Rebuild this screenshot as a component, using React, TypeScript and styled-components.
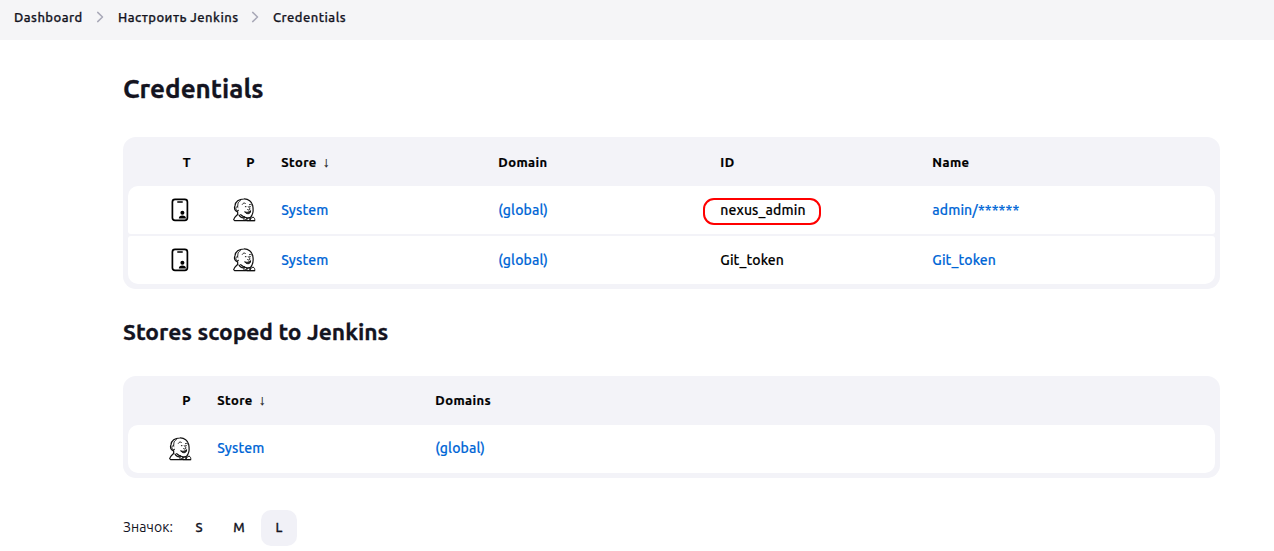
import React from "react";
import styled, { createGlobalStyle } from "styled-components";

const GlobalStyle = createGlobalStyle`
  body {
    margin: 0;
    background: #fff;
    color: #14141f;
    font-family: Ubuntu, "Noto Sans", "Open Sans", sans-serif;
  }
  svg { display: block; flex: none; }
`;

const Page = styled.div`
  height: 551px;
  overflow: hidden;
`;

const Breadcrumbs = styled.nav`
  display: flex;
  align-items: center;
  box-sizing: border-box;
  height: 40px;
  padding: 0 14px 6px;
  background: #f5f5f7;
`;

const Crumb = styled.a<{ $w: number }>`
  width: ${(p) => p.$w}px;
  font-size: 13px;
  font-weight: 500;
  line-height: 20px;
  letter-spacing: 0.46px;
  -webkit-text-stroke: 0.25px currentColor;
  white-space: nowrap;
`;

const Separator = styled.svg`
  margin: 0 11px 0 10px;
`;

const Content = styled.main`
  width: 1097px;
  margin-left: 123px;
`;

const Title = styled.h1`
  margin: 0;
  padding: 32px 0 31px;
  font-size: 26px;
  font-weight: 700;
  line-height: 34px;
  -webkit-text-stroke: 0.3px currentColor;
`;

const Subtitle = styled.h2`
  margin: 0;
  padding: 28px 0 29px;
  font-size: 22.75px;
  font-weight: 700;
  line-height: 30px;
  -webkit-text-stroke: 0.3px currentColor;
`;

const Table = styled.div`
  display: flex;
  flex-direction: column;
  gap: 2px;
  padding: 0 5px 5px;
  border-radius: 13px;
  background: #f3f3f8;
`;

const HeaderRow = styled.div<{ $columns: string; $raised?: boolean }>`
  display: grid;
  grid-template-columns: ${(p) => p.$columns};
  align-items: center;
  box-sizing: border-box;
  height: 49px;
  padding: ${(p) => (p.$raised ? "0 0 1px" : "1px 0 0")};
  margin-bottom: -2px;
  color: #000;
  font-size: 13px;
  font-weight: 700;
  letter-spacing: 0.42px;
  -webkit-text-stroke: 0.2px currentColor;
`;

const Row = styled.div<{ $columns: string; $first?: boolean; $last?: boolean }>`
  display: grid;
  grid-template-columns: ${(p) => p.$columns};
  align-items: center;
  height: 48px;
  border-radius: ${(p) => (p.$first ? "10px 10px" : "3px 3px")}
    ${(p) => (p.$last ? "10px 10px" : "3px 3px")};
  background: #fff;
  font-size: 14px;
  font-weight: 500;
  letter-spacing: 0.12px;
  -webkit-text-stroke: 0.15px currentColor;
`;

const IconCell = styled.div`
  display: flex;
  justify-content: flex-end;
  line-height: 20px;
`;

const IconHeading = styled(IconCell)`
  padding-right: 1px;
`;

const Cell = styled.div<{ $raised?: boolean }>`
  padding: 0 0 ${(p) => (p.$raised ? 2 : 0)}px 25.3px;
  color: #000;
  line-height: 20px;
  white-space: nowrap;
`;

const Link = styled.a`
  color: #0066d6;
`;

const SortArrow = styled.span`
  margin-left: 6px;
  color: #222;
  font-family: "Liberation Sans", sans-serif;
  font-size: 14px;
  font-weight: 400;
  line-height: 1;
`;

const Marked = styled.span`
  position: relative;
  &::after {
    content: "";
    position: absolute;
    left: -17.3px;
    top: -4px;
    box-sizing: border-box;
    width: 118px;
    height: 27px;
    border: 2px solid #ff0000;
    border-radius: 11px;
  }
`;

const SizeBar = styled.div`
  display: flex;
  align-items: center;
  margin-top: 32px;
  height: 36px;
  font-size: 14px;
`;

const SizeLabel = styled.span`
  width: 58px;
  padding-bottom: 2px;
  letter-spacing: 0.1px;
`;

const SizeButton = styled.button<{ $active?: boolean }>`
  width: 36px;
  height: 36px;
  margin-right: 4px;
  padding: 0 0 2px;
  border: 0;
  border-radius: 10px;
  background: ${(p) => (p.$active ? "#f1f1f7" : "transparent")};
  color: #14141f;
  font: inherit;
  font-size: 13px;
  font-weight: 500;
  -webkit-text-stroke: 0.3px currentColor;
`;

const Chevron = () => (
  <Separator width="14" height="14" viewBox="0 0 14 14" fill="none">
    <path d="M4.7 2.4 9.5 7l-4.8 4.6" stroke="#a9a9b8" strokeWidth="1.5" strokeLinecap="round" strokeLinejoin="round" />
  </Separator>
);

const CredentialIcon = () => (
  <svg width="24" height="24" viewBox="0 0 24 24">
    <rect x="4.4" y="1.4" width="15" height="21" rx="2.6" fill="none" stroke="#000" strokeWidth="1.7" />
    <path d="M9.8 3.9h4.4" stroke="#000" strokeWidth="1.5" strokeLinecap="round" />
    <circle cx="14.4" cy="14.7" r="2" />
    <path d="M10.8 20.5c0-2.1 1.4-3 3.6-3s3.6.9 3.6 3z" />
  </svg>
);

const ProviderIcon = () => (
  <svg width="24" height="24" viewBox="12 12 72 72" fill="none" stroke="#111" strokeWidth="3.6" strokeLinecap="round" strokeLinejoin="round">
    <path d="M27 53c-8-3-9-12-6-18 1-12 12-20 26-20 14-1 25 8 27 19 2 10 2 22-2 29-2 6-6 9-11 9-9 0-17-4-23-10" />
    <path d="M37 20c-9 5-7 11-8 18M30 40c-4-4-8 0-6 6 1 4 5 6 8 3" strokeWidth="3" />
    <path d="M29 53v8c-4 5-10 7-12 16l3 3h60M33 63c3 7 7 8 14 9" />
    <path d="M43 31c2-4 6-5 9-3m12 4c3-2 5-1 7 1" strokeWidth="2.8" />
    <path d="M52 38h2m11 0h2M61 38c3 4 6 6 4 9-2 2-4 1-6 0" strokeWidth="3" />
    <path d="M51 54c5 2 12 1 17-4 0 6-4 10-9 9-3 0-7-2-8-5z" fill="#333" strokeWidth="3" />
    <path d="m49 68 9 5-9 7zm17 7 9-6c5 2 6 7 5 11H68zM58 73l6-2 3 4v5h-9z" strokeWidth="3" />
  </svg>
);

const CREDENTIAL_COLUMNS = "64px 64px 217px 222px 212px 1fr";
const STORE_COLUMNS = "64px 218px 1fr";

const credentials = [
  { id: "nexus_admin", name: "admin/******", marked: true },
  { id: "Git_token", name: "Git_token", marked: false },
];

export default function App() {
  return (
    <Page>
      <GlobalStyle />
      <Breadcrumbs>
        <Crumb $w={69}>Dashboard</Crumb>
        <Chevron />
        <Crumb $w={120}>Настроить Jenkins</Crumb>
        <Chevron />
        <Crumb $w={74}>Credentials</Crumb>
      </Breadcrumbs>
      <Content>
        <Title>Credentials</Title>
        <Table>
          <HeaderRow $columns={CREDENTIAL_COLUMNS}>
            <IconHeading>T</IconHeading>
            <IconHeading>P</IconHeading>
            <Cell>Store<SortArrow>↓</SortArrow></Cell>
            <Cell>Domain</Cell>
            <Cell>ID</Cell>
            <Cell>Name</Cell>
          </HeaderRow>
          {credentials.map((c, i) => (
            <Row key={c.id} $columns={CREDENTIAL_COLUMNS} $first={i === 0} $last={i === credentials.length - 1}>
              <IconCell><CredentialIcon /></IconCell>
              <IconCell><ProviderIcon /></IconCell>
              <Cell><Link>System</Link></Cell>
              <Cell><Link>(global)</Link></Cell>
              <Cell>{c.marked ? <Marked>{c.id}</Marked> : c.id}</Cell>
              <Cell><Link>{c.name}</Link></Cell>
            </Row>
          ))}
        </Table>
        <Subtitle>Stores scoped to Jenkins</Subtitle>
        <Table>
          <HeaderRow $columns={STORE_COLUMNS} $raised>
            <IconHeading>P</IconHeading>
            <Cell>Store<SortArrow>↓</SortArrow></Cell>
            <Cell>Domains</Cell>
          </HeaderRow>
          <Row $columns={STORE_COLUMNS} $first $last>
            <IconCell><ProviderIcon /></IconCell>
            <Cell $raised><Link>System</Link></Cell>
            <Cell $raised><Link>(global)</Link></Cell>
          </Row>
        </Table>
        <SizeBar>
          <SizeLabel>Значок:</SizeLabel>
          <SizeButton>S</SizeButton>
          <SizeButton>M</SizeButton>
          <SizeButton $active>L</SizeButton>
        </SizeBar>
      </Content>
    </Page>
  );
}
